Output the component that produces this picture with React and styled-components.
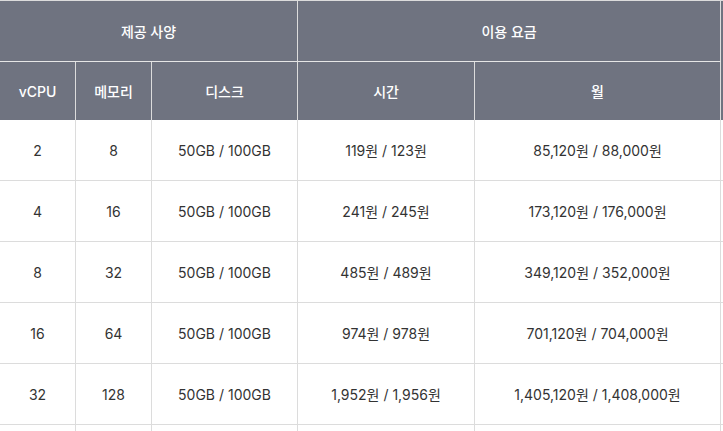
import React from "react"
import styled, { createGlobalStyle } from "styled-components"

const GlobalStyle = createGlobalStyle`
  html, body {
    margin: 0;
    padding: 0;
    background: #fff;
    overflow: hidden;
  }
  body {
    font-family: Inter, "Noto Sans CJK KR", "Noto Sans", sans-serif;
  }
`

const Table = styled.table`
  border-collapse: separate;
  border-spacing: 0;
  table-layout: fixed;
  width: 780px;
  border-top: 1px solid #dcdcdc;
  font-size: 14px;
`

const Col = styled.col`
  width: ${(p) => p.w}px;
`

const HeadCell = styled.th`
  background: #6f7380;
  color: #fff;
  font-weight: 500;
  text-align: center;
  height: ${(p) => p.h}px;
  padding: 0;
  border-right: 1px solid #dcdcdc;
  border-bottom: ${(p) => (p.divider ? "1px solid #e6e6e6" : "none")};
  box-sizing: content-box;
`

const Cell = styled.td`
  color: #333;
  text-align: center;
  height: 60px;
  padding: 0;
  border-right: 1px solid #dcdcdc;
  border-bottom: 1px solid #dcdcdc;
`

const rows = [
  ["2", "8", "50GB / 100GB", "119원 / 123원", "85,120원 / 88,000원"],
  ["4", "16", "50GB / 100GB", "241원 / 245원", "173,120원 / 176,000원"],
  ["8", "32", "50GB / 100GB", "485원 / 489원", "349,120원 / 352,000원"],
  ["16", "64", "50GB / 100GB", "974원 / 978원", "701,120원 / 704,000원"],
  ["32", "128", "50GB / 100GB", "1,952원 / 1,956원", "1,405,120원 / 1,408,000원"],
  ["", "", "", "", ""],
]

const App = () => {
  return (
    <>
      <GlobalStyle />
      <Table>
        <colgroup>
          <Col w={76} />
          <Col w={76} />
          <Col w={146} />
          <Col w={177} />
          <Col w={246} />
          <Col w={59} />
        </colgroup>
        <thead>
          <tr>
            <HeadCell colSpan={3} h={60} divider>
              제공 사양
            </HeadCell>
            <HeadCell colSpan={2} h={60} divider>
              이용 요금
            </HeadCell>
            <HeadCell rowSpan={2} h={119} />
          </tr>
          <tr>
            <HeadCell h={58}>vCPU</HeadCell>
            <HeadCell h={58}>메모리</HeadCell>
            <HeadCell h={58}>디스크</HeadCell>
            <HeadCell h={58}>시간</HeadCell>
            <HeadCell h={58}>월</HeadCell>
          </tr>
        </thead>
        <tbody>
          {rows.map((r, i) => (
            <tr key={i}>
              {r.map((v, j) => (
                <Cell key={j}>{v}</Cell>
              ))}
              <Cell />
            </tr>
          ))}
        </tbody>
      </Table>
    </>
  )
}

export default App
